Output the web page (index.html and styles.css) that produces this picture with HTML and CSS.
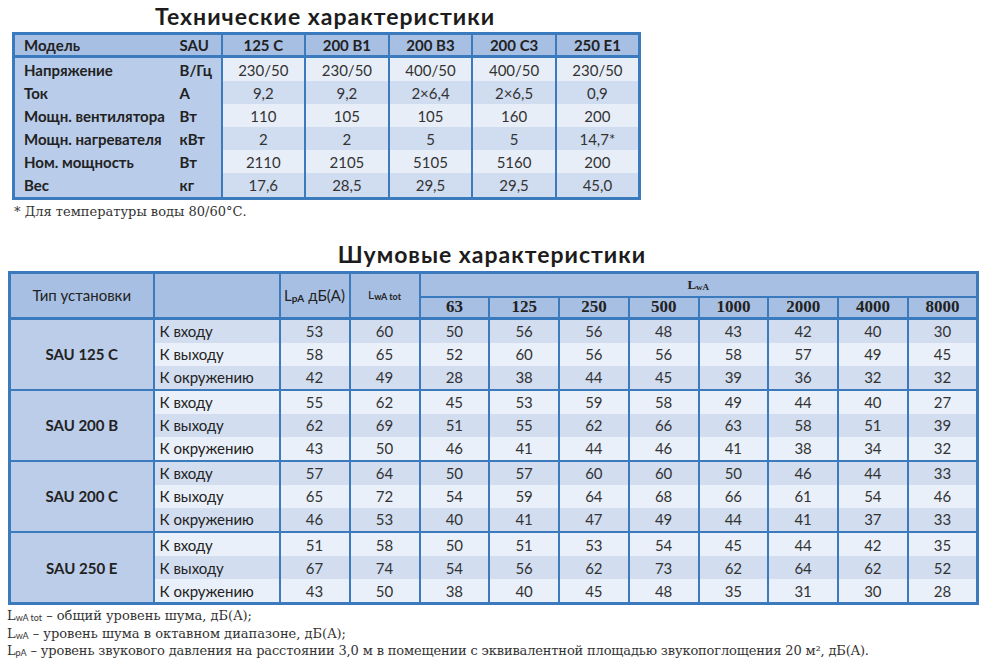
FILE: index.html
```html
<!DOCTYPE html>
<html lang="ru">
<head>
<meta charset="utf-8">
<title>Технические характеристики</title>
<link rel="stylesheet" href="styles.css">
</head>
<body>
<section class="tech">
  <h1 class="title">Технические характеристики</h1>
  <table class="spec">
    <colgroup>
      <col class="c-label"><col class="c-unit">
      <col class="c-val"><col class="c-val"><col class="c-val"><col class="c-val"><col class="c-val">
    </colgroup>
    <thead>
      <tr><th class="lbl">Модель</th><th class="unit">SAU</th><th class="mdl">125 С</th><th class="mdl">200 В1</th><th class="mdl">200 В3</th><th class="mdl">200 С3</th><th class="mdl">250 Е1</th></tr>
    </thead>
    <tbody>
      <tr class="l"><th class="lbl">Напряжение</th><th class="unit">В/Гц</th><td>230/50</td><td>230/50</td><td>400/50</td><td>400/50</td><td>230/50</td></tr>
      <tr class="d"><th class="lbl">Ток</th><th class="unit">А</th><td>9,2</td><td>9,2</td><td>2×6,4</td><td>2×6,5</td><td>0,9</td></tr>
      <tr class="l"><th class="lbl">Мощн. вентилятора</th><th class="unit">Вт</th><td>110</td><td>105</td><td>105</td><td>160</td><td>200</td></tr>
      <tr class="d"><th class="lbl">Мощн. нагревателя</th><th class="unit">кВт</th><td>2</td><td>2</td><td>5</td><td>5</td><td>14,7*</td></tr>
      <tr class="l"><th class="lbl">Ном. мощность</th><th class="unit">Вт</th><td>2110</td><td>2105</td><td>5105</td><td>5160</td><td>200</td></tr>
      <tr class="d"><th class="lbl">Вес</th><th class="unit">кг</th><td>17,6</td><td>28,5</td><td>29,5</td><td>29,5</td><td>45,0</td></tr>
    </tbody>
  </table>
  <p class="note">* Для температуры воды 80/60°С.</p>
</section>

<section class="noise">
  <h2 class="title">Шумовые характеристики</h2>
  <table class="sound">
    <colgroup>
      <col class="c-type"><col class="c-dir"><col class="c-num"><col class="c-num">
      <col class="c-f"><col class="c-f"><col class="c-f"><col class="c-f"><col class="c-f"><col class="c-f"><col class="c-f"><col class="c-f">
    </colgroup>
    <thead>
      <tr class="h1">
        <th rowspan="2" class="type">Тип установки</th>
        <th rowspan="2" class="blank"></th>
        <th rowspan="2" class="lp">L<sub>pA</sub> дБ(A)</th>
        <th rowspan="2" class="lwt">L<sub>wA tot</sub></th>
        <th colspan="8" class="lwa">L<sub>wA</sub></th>
      </tr>
      <tr class="h2">
        <th>63</th><th>125</th><th>250</th><th>500</th><th>1000</th><th>2000</th><th>4000</th><th>8000</th>
      </tr>
    </thead>
    <tbody>
      <tr class="d"><th rowspan="3" class="model">SAU 125 С</th><td class="dir">К входу</td><td>53</td><td>60</td><td>50</td><td>56</td><td>56</td><td>48</td><td>43</td><td>42</td><td>40</td><td>30</td></tr>
      <tr class="l"><td class="dir">К выходу</td><td>58</td><td>65</td><td>52</td><td>60</td><td>56</td><td>56</td><td>58</td><td>57</td><td>49</td><td>45</td></tr>
      <tr class="d"><td class="dir">К окружению</td><td>42</td><td>49</td><td>28</td><td>38</td><td>44</td><td>45</td><td>39</td><td>36</td><td>32</td><td>32</td></tr>
    </tbody>
    <tbody>
      <tr class="l"><th rowspan="3" class="model">SAU 200 В</th><td class="dir">К входу</td><td>55</td><td>62</td><td>45</td><td>53</td><td>59</td><td>58</td><td>49</td><td>44</td><td>40</td><td>27</td></tr>
      <tr class="d"><td class="dir">К выходу</td><td>62</td><td>69</td><td>51</td><td>55</td><td>62</td><td>66</td><td>63</td><td>58</td><td>51</td><td>39</td></tr>
      <tr class="l"><td class="dir">К окружению</td><td>43</td><td>50</td><td>46</td><td>41</td><td>44</td><td>46</td><td>41</td><td>38</td><td>34</td><td>32</td></tr>
    </tbody>
    <tbody>
      <tr class="d"><th rowspan="3" class="model">SAU 200 С</th><td class="dir">К входу</td><td>57</td><td>64</td><td>50</td><td>57</td><td>60</td><td>60</td><td>50</td><td>46</td><td>44</td><td>33</td></tr>
      <tr class="l"><td class="dir">К выходу</td><td>65</td><td>72</td><td>54</td><td>59</td><td>64</td><td>68</td><td>66</td><td>61</td><td>54</td><td>46</td></tr>
      <tr class="d"><td class="dir">К окружению</td><td>46</td><td>53</td><td>40</td><td>41</td><td>47</td><td>49</td><td>44</td><td>41</td><td>37</td><td>33</td></tr>
    </tbody>
    <tbody>
      <tr class="l"><th rowspan="3" class="model">SAU 250 Е</th><td class="dir">К входу</td><td>51</td><td>58</td><td>50</td><td>51</td><td>53</td><td>54</td><td>45</td><td>44</td><td>42</td><td>35</td></tr>
      <tr class="d"><td class="dir">К выходу</td><td>67</td><td>74</td><td>54</td><td>56</td><td>62</td><td>73</td><td>62</td><td>64</td><td>62</td><td>52</td></tr>
      <tr class="l"><td class="dir">К окружению</td><td>43</td><td>50</td><td>38</td><td>40</td><td>45</td><td>48</td><td>35</td><td>31</td><td>30</td><td>28</td></tr>
    </tbody>
  </table>
  <div class="legend">
    <p>L<sub>wA tot</sub> – общий уровень шума, дБ(A);</p>
    <p>L<sub>wA</sub> – уровень шума в октавном диапазоне, дБ(A);</p>
    <p class="long">L<sub>pA</sub> – уровень звукового давления на расстоянии 3,0 м в помещении с эквивалентной площадью звукопоглощения 20 м², дБ(A).</p>
  </div>
</section>
</body>
</html>
```

FILE: styles.css
```css
html, body {
  margin: 0;
  padding: 0;
  background: #ffffff;
}

body {
  width: 994px;
  height: 665px;
  overflow: hidden;
  font-family: Lato, "Open Sans", "DejaVu Sans", sans-serif;
  color: #222;
}

.title {
  margin: 0;
  font-size: 23px;
  line-height: 30px;
  font-weight: 700;
  text-align: center;
  color: #1c1c1c;
  letter-spacing: 1px;
}

table {
  border-collapse: collapse;
  table-layout: fixed;
}

th, td {
  padding: 0;
  font-weight: 400;
  line-height: 18px;
}

/* ---------- Technical table ---------- */
.tech {
  width: 626px;
  margin-left: 12px;
  padding-top: 1px;
}

.spec {
  width: 626px;
  margin-top: 1px;
  border: 3px solid #3a7abd;
  font-size: 15px;
}

.spec .c-label { width: 163px; }
.spec .c-unit { width: 45px; }
.spec .c-val { width: 83.6px; }

.spec thead th {
  height: 20px;
  background: #a7bfe3;
  border-bottom: 3px solid #3a7abd;
  font-weight: 700;
  color: #222;
}

.spec tbody th,
.spec tbody td {
  height: 23.1px;
}

.spec .lbl {
  text-align: left;
  padding-left: 9px;
  font-weight: 700;
  color: #222;
  white-space: nowrap;
}

.spec .unit {
  text-align: left;
  padding-left: 3px;
  font-weight: 700;
  color: #222;
  border-right: 2px solid #3a7abd;
}

.spec thead .lbl,
.spec thead .unit {
  background: #a7bfe3;
}

.spec tbody .lbl,
.spec tbody .unit {
  background: #b9cce9;
}

.spec .mdl {
  text-align: center;
  border-left: 2px solid #3a7abd;
}

.spec td {
  text-align: center;
  color: #333;
  border-left: 2px solid #3a7abd;
}

.spec tr.l td { background: #e8eef8; }
.spec tr.d td { background: #d0dcf0; }

.note {
  margin: 0;
  padding-left: 2px;
  font-family: "DejaVu Serif", "Liberation Serif", serif;
  font-size: 13px;
  line-height: 24px;
  color: #333;
}

/* ---------- Noise table ---------- */
.noise {
  width: 968px;
  margin-left: 8px;
  margin-top: 15px;
}

.sound {
  width: 968px;
  margin-top: 2px;
  border: 3px solid #3a7abd;
  font-size: 15px;
}

.sound .c-type { width: 144px; }
.sound .c-dir { width: 126px; }
.sound .c-num { width: 70px; }
.sound .c-f { width: 69.75px; }

.sound thead th {
  background: #a7bfe3;
  border-left: 2px solid #3a7abd;
  border-bottom: 3px solid #3a7abd;
  color: #222;
}

.sound thead .h1 th {
  height: 22px;
}

.sound thead .h1 .lwa {
  border-bottom: 2px solid #3a7abd;
  font-family: "Liberation Serif", serif;
  font-weight: 700;
  font-size: 13px;
}

.sound thead .h2 th {
  height: 19px;
  font-family: "Liberation Serif", "DejaVu Serif", serif;
  font-weight: 700;
  font-size: 17px;
}

.sound .type {
  font-size: 15px;
}

.sound .lp {
  font-size: 15px;
  white-space: nowrap;
}

.sound .lwt {
  font-size: 12px;
}

.sound sub {
  font-size: 9px;
  vertical-align: -1px;
  font-weight: 700;
  line-height: 0;
}

.sound .lp sub {
  font-size: 10px;
}

.sound tbody {
  border-top: 2px solid #3a7abd;
}

.sound tbody td,
.sound tbody th {
  height: 23.05px;
}

.sound .model {
  background: #bccdea;
  font-weight: 700;
  font-size: 15px;
  color: #222;
  text-align: center;
}

.sound td {
  text-align: center;
  color: #333;
  border-left: 2px solid #3a7abd;
}

.sound td.dir {
  text-align: left;
  padding-left: 5px;
  color: #222;
}

.sound tr.l td { background: #eaf0f9; }
.sound tr.d td { background: #d2ddf0; }

.legend {
  margin-top: 2px;
  margin-left: -1px;
  font-family: "DejaVu Serif", "Liberation Serif", serif;
  font-size: 13px;
  line-height: 17.5px;
  color: #333;
}

.legend p {
  margin: 0;
}

.legend .long {
  letter-spacing: -0.15px;
}

.legend sub {
  font-family: Lato, "DejaVu Sans", sans-serif;
  font-size: 9px;
  vertical-align: -1px;
  line-height: 0;
  letter-spacing: 0;
}
```
